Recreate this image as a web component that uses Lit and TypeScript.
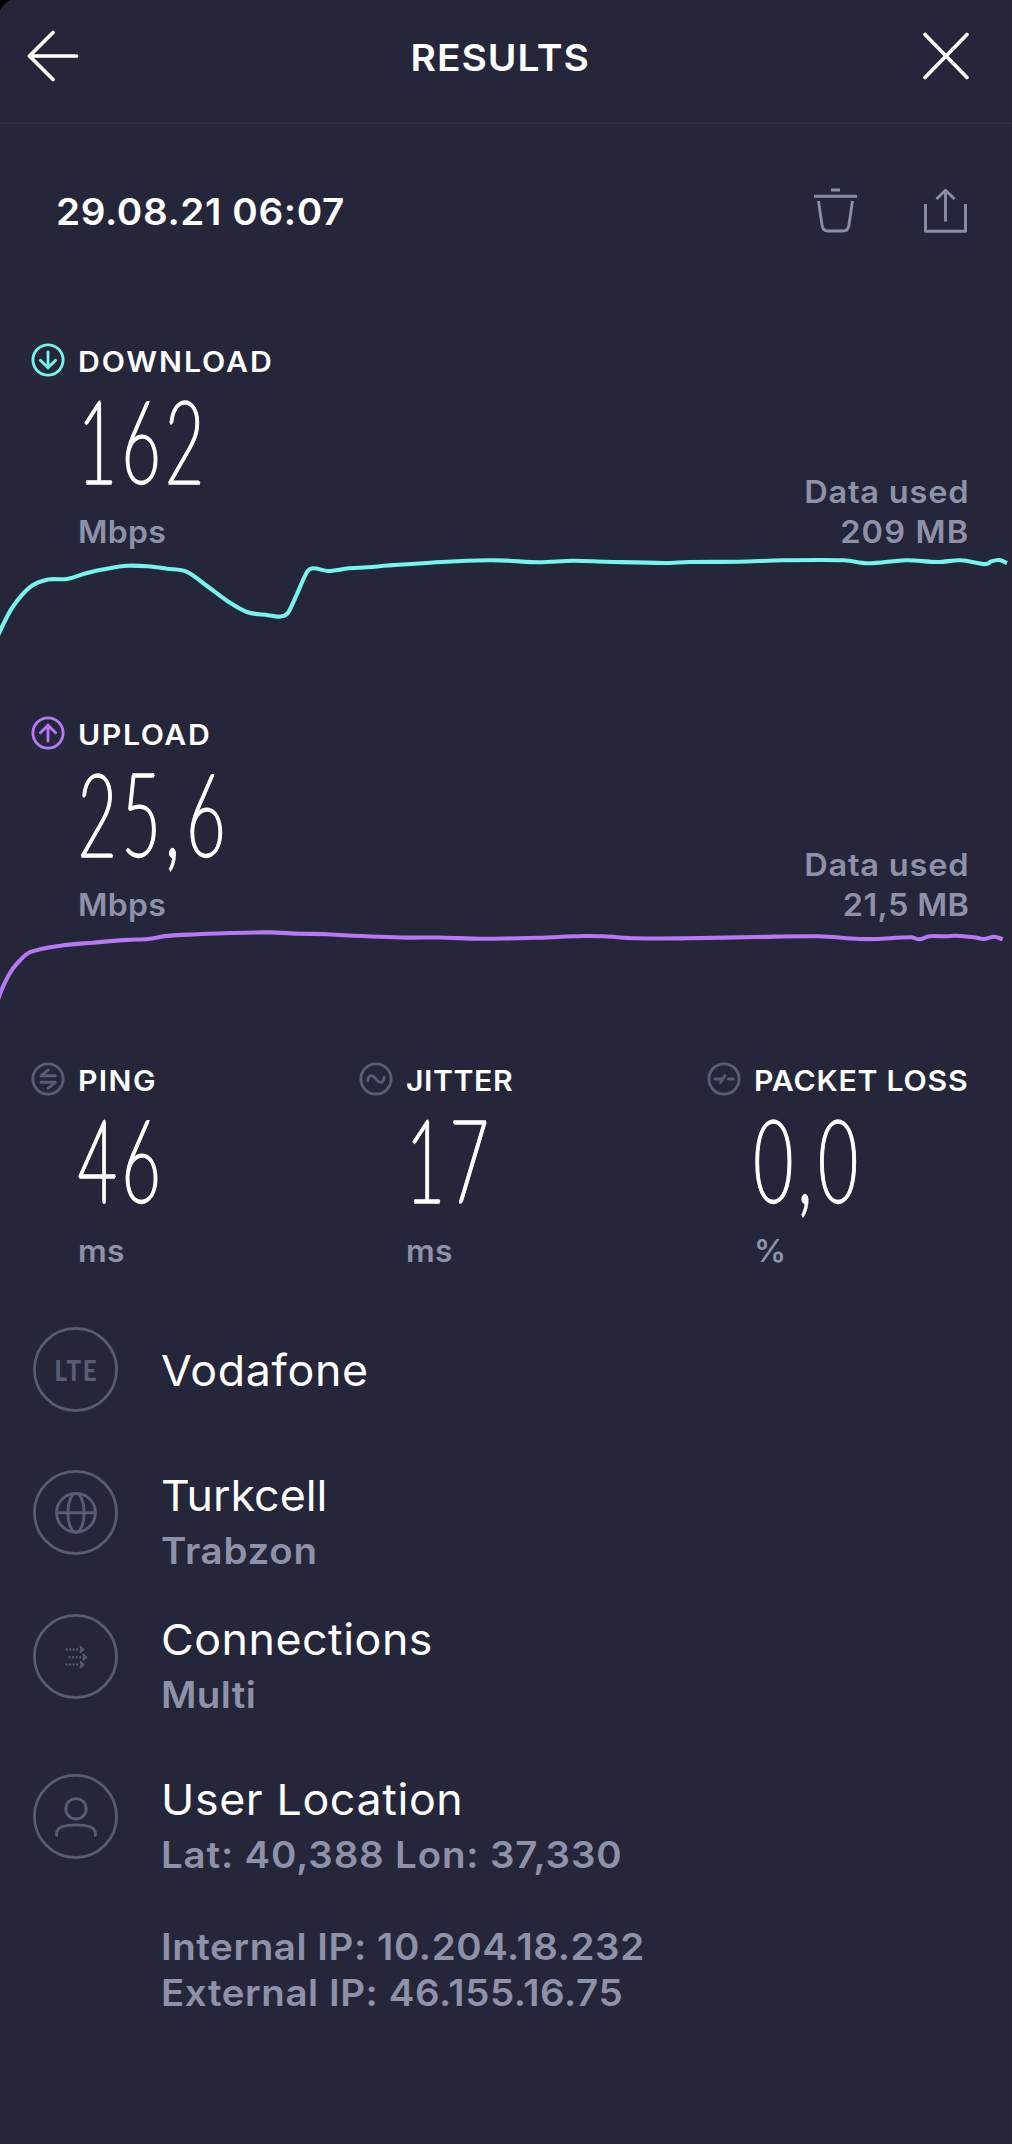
import { LitElement, html, css, svg, nothing, type TemplateResult } from "lit";
import { customElement, property } from "lit/decorators.js";
import { styleMap } from "lit/directives/style-map.js";

type Point = [number, number];

/** Smooth path through the samples (monotone in x, so the curve never loops back). */
function smoothPath(points: Point[]): string {
  let d = `M${points[0][0]} ${points[0][1]}`;
  for (let i = 0; i < points.length - 1; i++) {
    const before = points[i - 1] ?? points[i];
    const from = points[i];
    const to = points[i + 1];
    const after = points[i + 2] ?? to;
    const third = (to[0] - from[0]) / 3;
    const slopeFrom = (to[1] - before[1]) / (to[0] - before[0]);
    const slopeTo = (after[1] - from[1]) / (after[0] - from[0]);
    d += `C${from[0] + third} ${from[1] + slopeFrom * third} ${to[0] - third} ${to[1] - slopeTo * third} ${to[0]} ${to[1]}`;
  }
  return d;
}

const DOWNLOAD_SAMPLES: Point[] = [
  [-3, 86], [0, 79], [12, 56], [30, 35.2], [48, 27.6], [67, 27], [87, 20.9], [107, 16.7],
  [127, 13.8], [147, 14.3], [167, 16.7], [187, 19.8], [207, 34], [228, 49.5], [247, 60], [268, 63.2],
  [280, 64.6], [288, 60.7], [297, 42], [307, 20], [313, 16.3], [328, 19], [347, 16.5], [368, 15.3],
  [388, 13.5], [447, 9.7], [490, 8.3], [506, 8.6], [539.3, 10.3], [572.7, 8.7], [606, 9.7], [664.3, 11],
  [689.3, 10], [739, 9.7], [782.7, 8.3], [844.3, 8.3], [867.7, 11.3], [906, 8.3], [937.7, 10], [961, 8.3],
  [982.7, 12], [987.7, 11.6], [991, 9.5], [999.3, 8], [1007, 11],
];

const UPLOAD_SAMPLES: Point[] = [
  [-3, 78], [0, 69], [3.3, 61], [10, 48], [17, 38.5], [30, 27.2], [63.3, 20.3], [93, 17.7], [127, 14.9],
  [148, 14], [167, 10.9], [197, 9.3], [230, 8], [270, 7.4], [300, 8.7], [327, 9.2], [343, 10.3], [407, 12.6],
  [437, 12.5], [480, 13.7], [506, 13.5], [539.3, 12.7], [582.7, 11], [603, 11.3], [636, 13.3], [686, 13.3],
  [756, 12], [817.7, 11.3], [859.3, 14], [876, 14], [911, 12.3], [919.3, 14.3], [929.3, 11.3], [946, 11.3],
  [956, 10.7], [974, 12.3], [983.7, 14], [994.3, 11.7], [1002.7, 14.3],
];

const badges: Record<string, TemplateResult> = {
  download: svg`<path d="M17 9V25M9.4 17.2L17 24.8L24.6 17.2"/>`,
  upload: svg`<path d="M17 25V9M9.4 16.8L17 9.2L24.6 16.8"/>`,
  ping: svg`<path d="M17.2 7.8L10 13.8H24.4M10 20.2H24.4L17.2 26.2"/>`,
  jitter: svg`<path d="M8.8 18.8C9.6 12.4 14 12.4 17 17S24.4 21.6 25.2 15.2"/>`,
  loss: svg`<path d="M8.2 17H14.2M13.4 20.4L18 13.6M21.4 17H26"/>`,
};

const marks: Record<string, TemplateResult> = {
  globe: svg`<g stroke-width="2.9"><circle cx="43" cy="42.8" r="19.4"/><ellipse cx="43" cy="42.8" rx="8.2" ry="19.4"/><path d="M23.4 42.8H62.6"/></g>`,
  arrows: svg`<g stroke-width="2"><path stroke-dasharray="2 1.6" d="M32.5 35.5H48M35.5 43.2H51M32.5 50.6H48"/><path d="M47 32.4L50.2 35.5L47 38.6M50 40.1L53.2 43.2L50 46.3M47 47.5L50.2 50.6L47 53.7"/></g>`,
  person: svg`<g stroke-width="2.9" stroke-linecap="round"><circle cx="43" cy="34.8" r="10.2"/><path d="M23.6 61.2V59.6C23.6 53.4 31 50.9 43 50.9S62.4 53.4 62.4 59.6V61.2"/></g>`,
};

@customElement("metric-value")
class MetricValue extends LitElement {
  @property() icon = "";
  @property() label = "";
  @property() value = "";
  @property() unit = "";
  @property() tone = "#5a5c72";
  @property({ type: Number }) tracking = 3;

  static styles = css`
    :host { display: grid; grid-template-columns: 34px auto; column-gap: 13.2px; justify-content: start; }
    .badge { width: 34px; height: 34px; margin-top: 1px; fill: none; stroke-width: 2.9; stroke-linecap: round; stroke-linejoin: round; }
    .label { font-weight: 600; font-size: 28.5px; line-height: 40px; white-space: nowrap; transform: scaleX(1.06); transform-origin: 0 0; }
    .value { grid-column: 2; height: 119px; }
    .digits {
      display: block; width: 0; white-space: nowrap;
      font-family: Lato, "Liberation Sans", sans-serif; font-weight: 100; font-size: 115px; line-height: 112.4px;
      letter-spacing: 8.6px; transform: scaleX(0.58); transform-origin: 0 0;
      -webkit-text-stroke: 3.3px #fff; text-shadow: 1.3px 0 #fff, -1.3px 0 #fff, 2.6px 0 #fff, -2.6px 0 #fff;
    }
    .comma { letter-spacing: 12px; }
    .unit {
      grid-column: 2; justify-self: start; margin-top: 11px; font-weight: 600; font-size: 31px; line-height: 40px; letter-spacing: 0.3px;
      color: #8f91a9; transform: scaleX(1.03); transform-origin: 0 0;
    }
  `;

  render() {
    const [whole, fraction] = this.value.split(",");
    return html`
      <svg class="badge" viewBox="0 0 34 34" stroke=${this.tone}><circle cx="17" cy="17" r="15.1" />${badges[this.icon]}</svg>
      <div class="label" style=${styleMap({ letterSpacing: `${this.tracking}px` })}>${this.label}</div>
      <div class="value"><span class="digits">${whole}${fraction ? html`<span class="comma">,</span>${fraction}` : nothing}</span></div>
      <div class="unit">${this.unit}</div>
    `;
  }
}

@customElement("speed-section")
class SpeedSection extends LitElement {
  @property() icon = "";
  @property() label = "";
  @property() value = "";
  @property() used = "";
  @property() tone = "";
  @property({ type: Number }) tracking = 3;
  @property({ type: Number }) usedTracking = 2;
  @property({ attribute: false }) samples: Point[] = [];

  static styles = css`
    :host { display: block; height: 373px; }
    .top { display: flex; justify-content: space-between; align-items: flex-end; padding: 44px 42.2px 0 30.5px; }
    .used {
      text-align: right; font-weight: 600; font-size: 31px; line-height: 40px; letter-spacing: 0.75px; color: #8f91a9;
      transform: scaleX(1.05); transform-origin: 100% 0;
    }
    .chart { display: block; width: 100%; height: 92px; fill: none; stroke-width: 4.1; stroke-linejoin: round; overflow: hidden; }
  `;

  render() {
    return html`
      <div class="top">
        <metric-value icon=${this.icon} label=${this.label} value=${this.value} unit="Mbps" tone=${this.tone} .tracking=${this.tracking}></metric-value>
        <div class="used">
          <div>Data used</div>
          <div style=${styleMap({ letterSpacing: `${this.usedTracking}px` })}>${this.used}</div>
        </div>
      </div>
      <svg class="chart" viewBox="0 0 1012 92" preserveAspectRatio="none" stroke=${this.tone}><path d=${smoothPath(this.samples)} /></svg>
    `;
  }
}

@customElement("info-row")
class InfoRow extends LitElement {
  @property() mark = "";
  @property() heading = "";
  @property() detail = "";
  @property({ type: Number }) headingTracking = 0.6;
  @property({ type: Number }) detailTracking = 0.8;

  static styles = css`
    :host { display: grid; grid-template-columns: 85px auto; column-gap: 43px; justify-content: start; padding-left: 32.5px; }
    .ring { display: grid; width: 85px; height: 85px; }
    .ring > * { grid-area: 1 / 1; }
    .art { width: 85px; height: 85px; fill: none; stroke: #5a5c72; }
    .tag { place-self: center; color: #5a5c72; font: 900 29px/30px Lato, "Liberation Sans", sans-serif; letter-spacing: 2px; transform: translateX(1px) scaleX(0.83); }
    .text { transform: scaleX(1.04); transform-origin: 0 0; }
    .heading { font-size: 43px; line-height: 50px; white-space: nowrap; }
    .single { align-self: center; }
    .detail { margin-top: 8px; font-weight: 600; font-size: 37px; line-height: 46px; color: #8f91a9; white-space: nowrap; }
  `;

  render() {
    return html`
      <div class="ring">
        <svg class="art" viewBox="0 0 85 85"><circle cx="42.5" cy="42.5" r="41.1" stroke-width="2.7" />${marks[this.mark] ?? nothing}</svg>
        ${this.mark in marks ? nothing : html`<span class="tag">${this.mark}</span>`}
      </div>
      <div class=${this.detail ? "text" : "text single"}>
        <div class="heading" style=${styleMap({ letterSpacing: `${this.headingTracking}px` })}>${this.heading}</div>
        ${this.detail
          ? html`<div class="detail" style=${styleMap({ letterSpacing: `${this.detailTracking}px` })}>${this.detail}</div>`
          : nothing}
      </div>
    `;
  }
}

@customElement("app-root")
class AppRoot extends LitElement {
  static styles = css`
    :host {
      display: block; position: relative; height: 2144px; overflow: hidden;
      background: #25263a; color: #fff; font-family: Inter, "Liberation Sans", sans-serif;
    }
    .corner { position: absolute; left: 0; top: 0; width: 12px; height: 12px; }
    .header {
      display: flex; justify-content: space-between; align-items: flex-start; box-sizing: border-box;
      height: 124px; padding: 0 42px 0 27px; border-bottom: 2px solid #2e2f44;
    }
    .back, .close { margin-top: 30px; height: 52px; fill: none; stroke: #fff; stroke-width: 3.7; stroke-linecap: round; stroke-linejoin: round; }
    .back { width: 52px; }
    .close { width: 48px; }
    .title { margin: 0; padding-top: 33px; font-weight: 600; font-size: 37.5px; line-height: 50px; letter-spacing: 0.9px; transform: scaleX(1.04); }
    .toolbar { display: flex; align-items: center; height: 174px; padding: 0 44px 0 56px; }
    .date { flex: 1; font-weight: 600; font-size: 37.5px; letter-spacing: 0.6px; transform: scaleX(1.03); transform-origin: 0 0; }
    .tool { width: 45px; height: 46px; fill: none; stroke: #8c8ea6; stroke-width: 2.9; stroke-linejoin: round; }
    .share { margin-left: 65px; }
    .metrics { display: grid; grid-template-columns: 328.3px 348px auto; padding: 17px 0 0 30.5px; }
    .info { display: flex; flex-direction: column; margin-top: 56px; }
    .globe { margin-top: 58px; }
    .connections { margin-top: 39.5px; }
    .location { margin-top: 56.5px; }
    .addresses {
      margin: 46px 0 0 161px; font-weight: 600; font-size: 37px; line-height: 46px; color: #8f91a9; letter-spacing: 0.55px;
      transform: scaleX(1.04); transform-origin: 0 0;
    }
  `;

  render() {
    return html`
      <header class="header">
        <svg class="back" viewBox="0 0 52 52"><path d="M26 2.5L2.5 26L26 49.5M2.5 26H49.5" /></svg>
        <h1 class="title">RESULTS</h1>
        <svg class="close" viewBox="0 0 48 52"><path d="M3 4.5L45 47.5M45 4.5L3 47.5" /></svg>
      </header>
      <div class="toolbar">
        <div class="date">29.08.21 06:07</div>
        <svg class="tool" viewBox="0 0 45 46"><path d="M1 8.3H44M18 2H27M5.5 13L9 37C9.6 41.6 11.6 43 15 43H30C33.4 43 35.4 41.6 36 37L39.5 13" /></svg>
        <svg class="tool share" viewBox="0 0 45 46"><path d="M2.5 16V43.2H42.5V16M22.5 33.5V2.5M13.5 11L22.5 2.2L31.5 11" /></svg>
      </div>
      <speed-section icon="download" label="DOWNLOAD" value="162" used="209 MB" tone="#75f5ec"
        .tracking=${1.8} .usedTracking=${1.1} .samples=${DOWNLOAD_SAMPLES}></speed-section>
      <speed-section icon="upload" label="UPLOAD" value="25,6" used="21,5 MB" tone="#b878f6"
        .tracking=${1.5} .usedTracking=${0.3} .samples=${UPLOAD_SAMPLES}></speed-section>
      <div class="metrics">
        <metric-value icon="ping" label="PING" value="46" unit="ms" .tracking=${1.3}></metric-value>
        <metric-value icon="jitter" label="JITTER" value="17" unit="ms" .tracking=${0.55}></metric-value>
        <metric-value icon="loss" label="PACKET LOSS" value="0,0" unit="%" .tracking=${0.73}></metric-value>
      </div>
      <div class="info">
        <info-row mark="LTE" heading="Vodafone" .headingTracking=${0.65}></info-row>
        <info-row class="globe" mark="globe" heading="Turkcell" detail="Trabzon" .headingTracking=${0} .detailTracking=${0.7}></info-row>
        <info-row class="connections" mark="arrows" heading="Connections" detail="Multi" .headingTracking=${0.5} .detailTracking=${0.35}></info-row>
        <info-row class="location" mark="person" heading="User Location" detail="Lat: 40,388 Lon: 37,330"></info-row>
      </div>
      <div class="addresses">
        <div>Internal IP: 10.204.18.232</div>
        <div>External IP: 46.155.16.75</div>
      </div>
      <svg class="corner" viewBox="0 0 12 12"><path d="M0 0H10.5C6 2.5 2.5 6 0 10.5Z" fill="#000" /></svg>
    `;
  }
}
